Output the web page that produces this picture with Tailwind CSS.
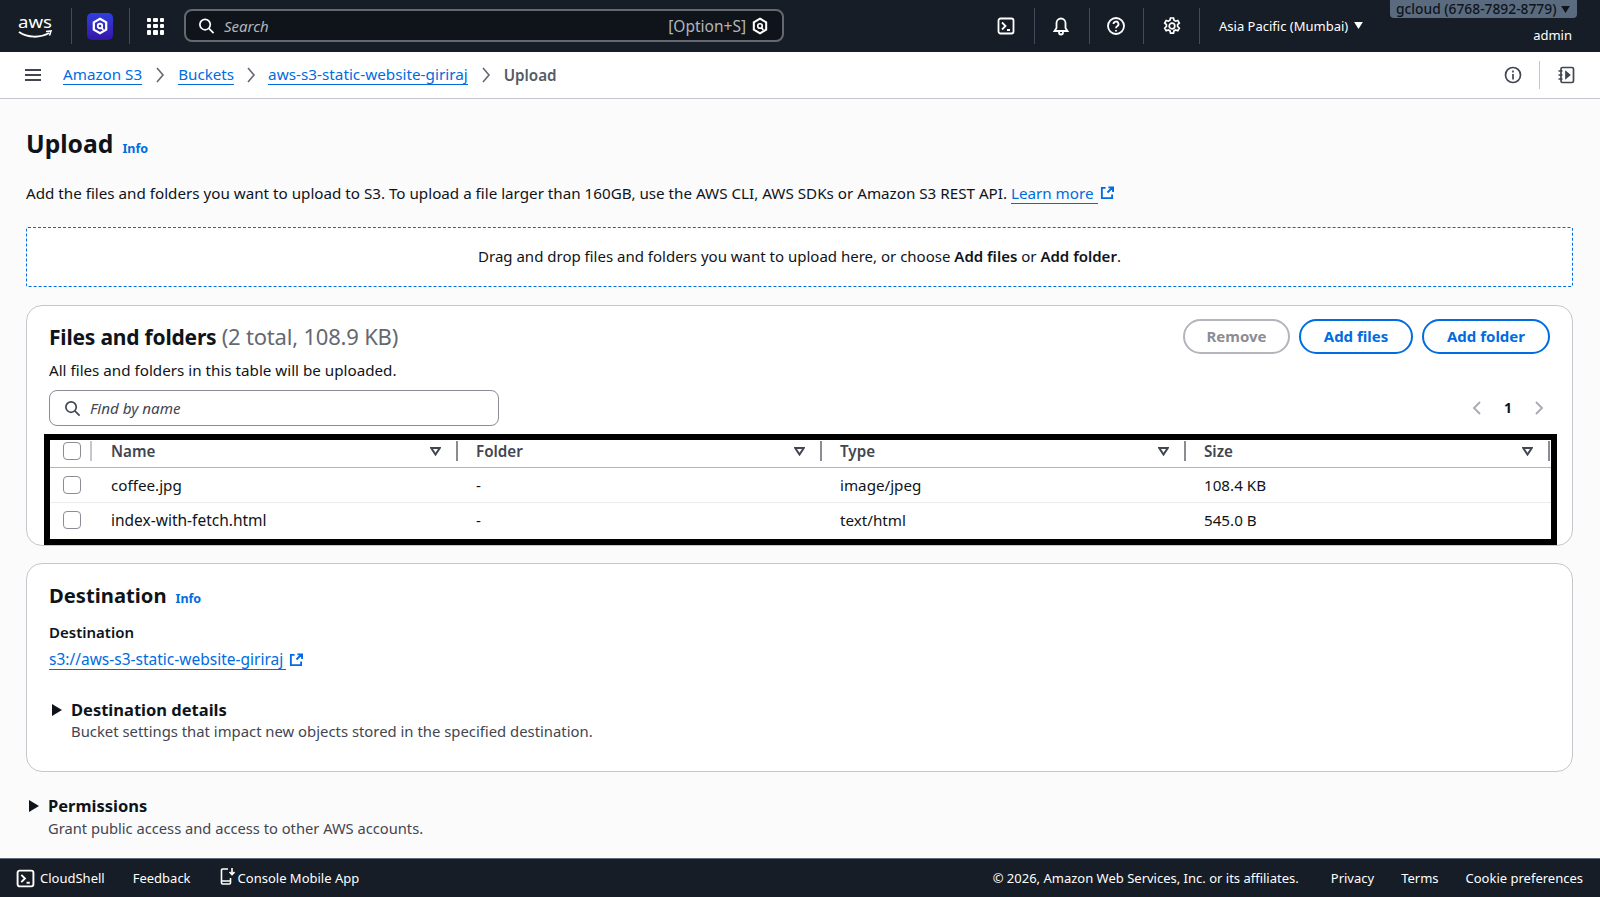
<!DOCTYPE html>
<html lang="en"><head><meta charset="utf-8"><title>Upload</title>
<script src="https://cdn.jsdelivr.net/npm/@tailwindcss/browser@4"></script></head>
<body class="w-[1600px] h-[897px] overflow-hidden flex flex-col bg-[#fbfbfc] text-[#0f141a] font-['Noto_Sans',sans-serif] text-[15.2px] leading-5">
<header class="h-[52px] shrink-0 bg-[#161d26] flex items-center text-white relative">
  <div class="w-[53px] ml-[18px] shrink-0">
    <svg width="36" height="28" viewBox="0 0 36 28" class="overflow-visible"><text x="0" y="16" font-size="17" fill="#fff" font-family="Noto Sans" textLength="34" lengthAdjust="spacingAndGlyphs">aws</text><path d="M1 20c9 6 21 6 30 1" fill="none" stroke="#fff" stroke-width="2"/><path d="M28 19.500l5-.500-1.500 4.500" fill="none" stroke="#fff" stroke-width="1.600"/></svg>
  </div>
  <div class="w-px h-[36px] bg-[#414d5c] shrink-0"></div>
  <div class="ml-[15px] w-[26px] h-[27px] rounded-[5px] bg-gradient-to-b from-[#2f3fe0] to-[#3413a8] flex items-center justify-center shrink-0">
    <svg width="16" height="18" viewBox="0 0 14 16"><path d="M7 1.500l5.500 3.200v6.600L7 14.500l-5.500-3.200V4.700z" fill="none" stroke="#fff" stroke-width="2"/><circle cx="7" cy="8" r="2" fill="none" stroke="#fff" stroke-width="1.600"/><path d="M8 9.500l2 2" stroke="#fff" stroke-width="1.600"/></svg>
  </div>
  <div class="w-px h-[36px] bg-[#414d5c] ml-[16px] shrink-0"></div>
  <div class="ml-[17px] w-[17px] h-[17px] grid grid-cols-3 gap-[2px] shrink-0">
    <i class="bg-white rounded-[1px]"></i><i class="bg-white rounded-[1px]"></i><i class="bg-white rounded-[1px]"></i><i class="bg-white rounded-[1px]"></i><i class="bg-white rounded-[1px]"></i><i class="bg-white rounded-[1px]"></i><i class="bg-white rounded-[1px]"></i><i class="bg-white rounded-[1px]"></i><i class="bg-white rounded-[1px]"></i>
  </div>
  <div class="ml-[20px] -mt-[1px] w-[600px] h-[33px] rounded-[8px] border-2 border-[#656871] bg-[#0f141a] flex items-center pl-[12px] pr-[14px] shrink-0">
    <svg width="17" height="18" viewBox="0 0 18 18" fill="none" stroke="#fff" stroke-width="1.800"><circle cx="7.500" cy="7.500" r="5.500"/><path d="M11.500 11.500l5 5"/></svg>
    <span class="italic ml-[9px] text-[15px] text-[#b4b4bb]">Search</span>
    <span class="ml-auto text-[15.5px] text-[#b4b4bb]">[Option+S]</span>
    <svg class="ml-[6px]" width="16" height="18" viewBox="0 0 14 16"><path d="M7 1.500l5.500 3.200v6.600L7 14.500l-5.500-3.200V4.700z" fill="none" stroke="#fff" stroke-width="1.800"/><circle cx="7" cy="8" r="2" fill="none" stroke="#fff" stroke-width="1.500"/><path d="M8 9.500l2 2" stroke="#fff" stroke-width="1.500"/></svg>
  </div>
  <div class="ml-auto flex items-center h-full mr-[23px]">
    <div class="flex items-center justify-center w-[53px] pr-[3px]"><svg width="18" height="18" viewBox="0 0 18 18" fill="none" stroke="#fff" stroke-width="1.800"><rect x="1.500" y="1.500" width="15" height="15" rx="2"/><path d="M5 5.500l3.500 3.500L5 12.500M10 13h3"/></svg></div>
    <div class="w-px h-[36px] bg-[#414d5c]"></div>
    <div class="flex items-center justify-center w-[54px] pr-[3px]"><svg width="18" height="20" viewBox="0 0 18 20" fill="none" stroke="#fff" stroke-width="1.800"><path d="M2.500 15h13l-2-3V7a4.500 4.500 0 0 0-9 0v5zM7 15v1.500a2 2 0 0 0 4 0V15"/></svg></div>
    <div class="w-px h-[36px] bg-[#414d5c]"></div>
    <div class="flex items-center justify-center w-[53px] pr-[1px]"><svg width="20" height="20" viewBox="0 0 20 20" fill="none" stroke="#fff" stroke-width="1.800"><circle cx="10" cy="10" r="8"/><path d="M7.500 8a2.500 2.500 0 1 1 3.700 2.200c-.8.500-1.200 1-1.200 2"/><path d="M10 14v1.500"/></svg></div>
    <div class="w-px h-[36px] bg-[#414d5c]"></div>
    <div class="flex items-center justify-center w-[55px]"><svg width="20" height="20" viewBox="0 0 20 20" fill="none" stroke="#fff" stroke-width="1.700"><circle cx="10" cy="10" r="2.800"/><path d="M8.500 2h3l.5 2.300 1.600.9 2.200-.7 1.500 2.600-1.700 1.600v1.800l1.700 1.600-1.500 2.600-2.200-.7-1.600.9-.5 2.300h-3l-.5-2.300-1.600-.9-2.200.7-1.500-2.600 1.700-1.600V8.700L2.700 7.100l1.500-2.600 2.200.7L8 4.300z"/></svg></div>
    <div class="w-px h-[36px] bg-[#414d5c]"></div>
    <div class="ml-[19px] flex items-center text-[13px] w-[171px] -mt-[1px]"><span>Asia Pacific (Mumbai)</span><svg class="ml-[6px]" width="9" height="7" viewBox="0 0 10 8"><path d="M0 0h10L5 8z" fill="#fff"/></svg></div>
    <div class="flex flex-col items-end self-start w-[187px]">
      <div class="h-[18px] bg-[#5b6b7f] rounded-b-[4px] pl-[6px] flex items-center text-[13.800px] font-medium text-[#0f141a] w-full whitespace-nowrap">gcloud (6768-7892-8779)<svg class="ml-[5px]" width="9" height="7" viewBox="0 0 10 8"><path d="M0 0h10L5 8z" fill="#0f141a"/></svg></div>
      <div class="mt-[7px] mr-[5px] text-[13px] leading-[20px]">admin</div>
    </div>
  </div>
</header>
<nav class="h-[47px] shrink-0 bg-white border-b border-[#c6c6cd] flex items-center pb-[1px]">
  <div class="ml-[25px] w-[16px] flex flex-col gap-[3px]"><i class="block h-[2px] bg-[#424650]"></i><i class="block h-[2px] bg-[#424650]"></i><i class="block h-[2px] bg-[#424650]"></i></div>
  <a class="ml-[22px] text-[#006ce0] border-b border-[#006ce0]">Amazon S3</a>
  <svg class="mx-[13px]" width="10" height="16" viewBox="0 0 10 16" fill="none" stroke="#656871" stroke-width="1.600"><path d="M2 1l6 7-6 7"/></svg>
  <a class="text-[#006ce0] border-b border-[#006ce0]">Buckets</a>
  <svg class="mx-[12px]" width="10" height="16" viewBox="0 0 10 16" fill="none" stroke="#656871" stroke-width="1.600"><path d="M2 1l6 7-6 7"/></svg>
  <a class="text-[#006ce0] border-b border-[#006ce0] text-[15.300px]">aws-s3-static-website-giriraj</a>
  <svg class="mx-[13px]" width="10" height="16" viewBox="0 0 10 16" fill="none" stroke="#656871" stroke-width="1.600"><path d="M2 1l6 7-6 7"/></svg>
  <span class="font-semibold text-[#545b64]">Upload</span>
  <div class="ml-auto flex items-center mr-[25px]">
    <svg width="18" height="18" viewBox="0 0 18 18" fill="none" stroke="#424650" stroke-width="1.700"><circle cx="9" cy="9" r="7.500"/><path d="M9 8v5.500M9 4.500V6.500"/></svg>
    <div class="w-px h-[28px] bg-[#c6c6cd] mx-[17px]"></div>
    <svg width="18" height="18" viewBox="0 0 18 18" fill="none" stroke="#424650" stroke-width="1.700"><rect x="4" y="1.500" width="12.500" height="15" rx="1.500"/><path d="M1.500 5h4M1.500 9h4M1.500 13h4"/><path d="M9 6l3.500 3L9 12z" fill="#424650"/></svg>
  </div>
</nav>
<main class="flex-1 min-h-0 pl-[26px] pr-[27px] pt-[28px]">
  <div class="flex items-baseline"><h1 class="text-[24.700px] leading-[34px] font-bold">Upload</h1><a class="ml-[9px] text-[12.500px] font-bold text-[#006ce0]">Info</a></div>
  <p class="mt-[21px] leading-[22px] flex items-center whitespace-pre">Add the files and folders you want to upload to S3. To upload a file larger than 160GB, use the AWS CLI, AWS SDKs or Amazon S3 REST API. <a class="text-[#006ce0] border-b border-[#006ce0] leading-[20px] pr-[4px]">Learn more</a><svg class="ml-[2px]" width="14" height="14" viewBox="0 0 15 15" fill="none" stroke="#006ce0" stroke-width="2"><path d="M6 2H2v11h11V9M8 7l5.500-5.500M9 1.500h5v5"/></svg></p>
  <div class="mt-[23px] h-[60px] border border-dashed border-[#006ce0] rounded-[2px] bg-white flex items-center justify-center text-[15px] pb-[2px]"><span>Drag and drop files and folders you want to upload here, or choose <b class="font-semibold">Add files</b> or <b class="font-semibold">Add folder</b>.</span></div>
  <section class="mt-[18px] h-[241px] rounded-[16px] border border-[#c6c6cd] bg-white px-[22px] pt-[13px] relative">
    <div class="flex items-center justify-between">
      <h2 class="text-[21px] leading-[34px] font-bold tracking-[-0.2px]">Files and folders <span class="font-normal text-[22px] text-[#656871]">(2 total, 108.9 KB)</span></h2>
      <div class="flex gap-[9px] font-bold text-[15px]">
        <button class="w-[107px] h-[35px] rounded-full border-2 border-[#b4b4bb] text-[#8c8c94] pb-[1px]">Remove</button>
        <button class="w-[114px] h-[35px] rounded-full border-2 border-[#006ce0] text-[#006ce0] pb-[1px]">Add files</button>
        <button class="w-[128px] h-[35px] rounded-full border-2 border-[#006ce0] text-[#006ce0] pb-[1px]">Add folder</button>
      </div>
    </div>
    <p class="mt-[6px] leading-[20px]">All files and folders in this table will be uploaded.</p>
    <div class="mt-[10px] flex items-center justify-between">
      <div class="w-[450px] h-[36px] rounded-[8px] border border-[#8c8c94] flex items-center px-[14px] italic text-[#424650]">
        <svg width="17" height="17" viewBox="0 0 18 18" fill="none" stroke="#424650" stroke-width="1.800"><circle cx="7.500" cy="7.500" r="5.500"/><path d="M11.500 11.500l5 5"/></svg>
        <span class="ml-[9px]">Find by name</span>
      </div>
      <div class="flex items-center mr-[6px]">
        <svg width="10" height="16" viewBox="0 0 10 16" fill="none" stroke="#a8a8b0" stroke-width="1.800"><path d="M8 2L2 8l6 6"/></svg>
        <span class="mx-[22px] font-bold text-[14px]">1</span>
        <svg width="10" height="16" viewBox="0 0 10 16" fill="none" stroke="#a8a8b0" stroke-width="1.800"><path d="M2 2l6 6-6 6"/></svg>
      </div>
    </div>
    <div class="mt-[14px] -mr-[2px]">
      <div class="flex h-[28px] items-center border-b border-[#b4b4bb] font-semibold text-[#424650] pb-[5px]">
        <div class="w-[43px] flex items-center"><i class="block w-[18px] h-[18px] border border-[#8c8c94] rounded-[4px] ml-[14px]"></i><i class="block w-[2px] h-[20px] bg-[#c6c6cd] ml-auto"></i></div>
        <div class="w-[2px]"></div>
        <div class="w-[362px] flex items-center pl-[17px] justify-between pr-[15px]"><span>Name</span><svg width="11" height="9" viewBox="0 0 11 9" fill="none" stroke="#424650" stroke-width="2"><path d="M1.200 1h8.600L5.500 7.500z"/></svg></div>
        <i class="block w-[2px] h-[20px] bg-[#8c8c94]"></i>
        <div class="w-[362px] flex items-center pl-[18px] justify-between pr-[15px]"><span>Folder</span><svg width="11" height="9" viewBox="0 0 11 9" fill="none" stroke="#424650" stroke-width="2"><path d="M1.200 1h8.600L5.500 7.500z"/></svg></div>
        <i class="block w-[2px] h-[20px] bg-[#8c8c94]"></i>
        <div class="w-[362px] flex items-center pl-[18px] justify-between pr-[15px]"><span>Type</span><svg width="11" height="9" viewBox="0 0 11 9" fill="none" stroke="#424650" stroke-width="2"><path d="M1.200 1h8.600L5.500 7.500z"/></svg></div>
        <i class="block w-[2px] h-[20px] bg-[#8c8c94]"></i>
        <div class="w-[362px] flex items-center pl-[18px] justify-between pr-[15px]"><span>Size</span><svg width="11" height="9" viewBox="0 0 11 9" fill="none" stroke="#424650" stroke-width="2"><path d="M1.200 1h8.600L5.500 7.500z"/></svg></div>
        <i class="block w-[2px] h-[20px] bg-[#8c8c94]"></i>
      </div>
      <div class="flex h-[35px] items-center border-b border-[#ebebf0]">
        <div class="w-[62px]"><i class="block w-[18px] h-[18px] border border-[#8c8c94] rounded-[4px] ml-[14px]"></i></div>
        <div class="w-[365px]">coffee.jpg</div><div class="w-[364px]">-</div><div class="w-[364px]">image/jpeg</div><div>108.4 KB</div>
      </div>
      <div class="flex h-[34px] items-center">
        <div class="w-[62px]"><i class="block w-[18px] h-[18px] border border-[#8c8c94] rounded-[4px] ml-[14px]"></i></div>
        <div class="w-[365px] text-[15.500px]">index-with-fetch.html</div><div class="w-[364px]">-</div><div class="w-[364px]">text/html</div><div>545.0 B</div>
      </div>
    </div>
    <div class="absolute left-[17px] top-[128px] w-[1513px] h-[111px] border-[6px] border-black pointer-events-none"></div>
  </section>
  <section class="mt-[17px] h-[209px] rounded-[16px] border border-[#c6c6cd] bg-white px-[22px] pt-[15px]">
    <div class="flex items-baseline"><h2 class="text-[20.200px] leading-[32px] font-bold">Destination</h2><a class="ml-[9px] text-[12.500px] font-bold text-[#006ce0]">Info</a></div>
    <div class="mt-[11px] font-semibold text-[15px] leading-[20px]">Destination</div>
    <div class="mt-[7px] leading-[22px] flex items-center"><a class="text-[15.500px] text-[#006ce0] border-b border-[#006ce0] leading-[20px] pr-[3px]">s3://aws-s3-static-website-giriraj</a><svg class="ml-[3px]" width="14" height="14" viewBox="0 0 15 15" fill="none" stroke="#006ce0" stroke-width="2"><path d="M6 2H2v11h11V9M8 7l5.500-5.500M9 1.500h5v5"/></svg></div>
    <div class="mt-[29px] flex">
      <svg class="mt-[5px] ml-[3px] mr-[9px]" width="10" height="12" viewBox="0 0 10 12"><path d="M0 0l10 6-10 6z" fill="#0f141a"/></svg>
      <div><div class="text-[16.500px] leading-[22px] font-bold">Destination details</div><div class="text-[#424650] text-[14.850px] leading-[21px]">Bucket settings that impact new objects stored in the specified destination.</div></div>
    </div>
  </section>
  <div class="mt-[23px] flex">
    <svg class="mt-[5px] ml-[3px] mr-[9px]" width="10" height="12" viewBox="0 0 10 12"><path d="M0 0l10 6-10 6z" fill="#0f141a"/></svg>
    <div><div class="text-[16.500px] leading-[22px] font-bold">Permissions</div><div class="text-[#424650] text-[14.700px] leading-[22px]">Grant public access and access to other AWS accounts.</div></div>
  </div>
</main>
<footer class="h-[39px] shrink-0 bg-[#161d26] border-t border-[#5f6b7a] text-white text-[13px] flex items-center">
  <svg class="ml-[16px]" width="19" height="19" viewBox="0 0 18 18" fill="none" stroke="#fff" stroke-width="1.800"><rect x="1.500" y="1.500" width="15" height="15" rx="2"/><path d="M5 5.500l3.500 3.500L5 12.500M10 13h3"/></svg>
  <span class="ml-[5px]">CloudShell</span><span class="ml-[28px]">Feedback</span>
  <svg class="ml-[29px] -mt-[3px]" width="15" height="19" viewBox="0 0 15 19" fill="none" stroke="#fff" stroke-width="1.600"><path d="M8 2H2.500a1 1 0 0 0-1 1v13a1 1 0 0 0 1 1h7a1 1 0 0 0 1-1v-5M1.500 14h9M12 1v6M9.500 5l2.500 2.500L14.500 5"/></svg>
  <span class="ml-[3px]">Console Mobile App</span>
  <div class="ml-auto flex gap-[27px] mr-[17px]"><span class="mr-[5px]">© 2026, Amazon Web Services, Inc. or its affiliates.</span><span>Privacy</span><span>Terms</span><span>Cookie preferences</span></div>
</footer>
</body></html>
